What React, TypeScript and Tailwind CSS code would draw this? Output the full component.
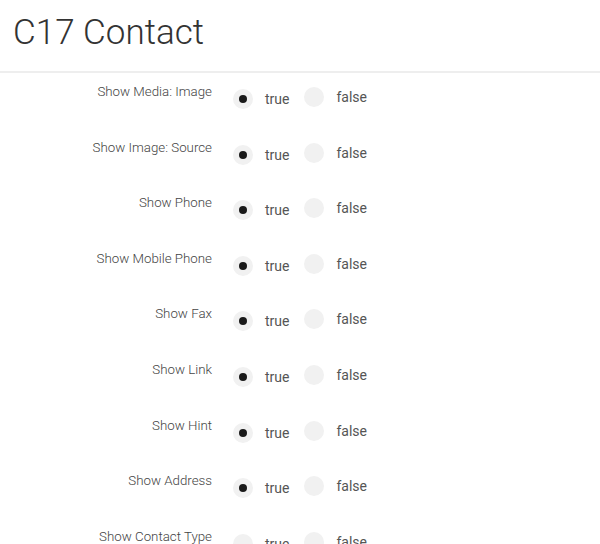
import React from "react";

const rows = [
  "Show Media: Image",
  "Show Image: Source",
  "Show Phone",
  "Show Mobile Phone",
  "Show Fax",
  "Show Link",
  "Show Hint",
  "Show Address",
  "Show Contact Type",
];

function Row({ label, last }: { label: string; last?: boolean }) {
  return (
    <div className="flex h-[55.6px] shrink-0 items-start">
      <div className="w-[212px] shrink-0 pt-[9px] text-right text-[13.3px] font-light leading-[20px] text-[#444]">
        {label}
      </div>
      <div className="ml-[21px] flex items-start pt-[15px]">
        <div className="mt-[1px] flex items-center">
          <span className="flex h-[20px] w-[20px] items-center justify-center rounded-full bg-[#f1f1f1]">
            {!last && <span className="h-[8px] w-[8px] rounded-full bg-[#1a1a1a]" />}
          </span>
          <span className="ml-[12px] text-[14px] leading-[20px] text-[#555]">true</span>
        </div>
        <div className="-mt-[1px] ml-[15px] flex items-center">
          <span className="h-[20px] w-[20px] rounded-full bg-[#f1f1f1]" />
          <span className="ml-[12px] text-[14px] leading-[20px] text-[#555]">false</span>
        </div>
      </div>
    </div>
  );
}

export default function App() {
  return (
    <div
      className="flex h-[544px] w-[600px] flex-col overflow-hidden bg-white"
      style={{ fontFamily: "Roboto, 'Noto Sans', sans-serif" }}
    >
      <div className="h-[73px] shrink-0 border-b-2 border-[#eeeeee] pl-[13px] pt-[15px]">
        <h1 className="text-[35px] font-light leading-none text-[#333]">C17 Contact</h1>
      </div>
      <div className="flex flex-col">
        {rows.map((r, i) => (
          <Row key={r} label={r} last={i === rows.length - 1} />
        ))}
      </div>
    </div>
  );
}
